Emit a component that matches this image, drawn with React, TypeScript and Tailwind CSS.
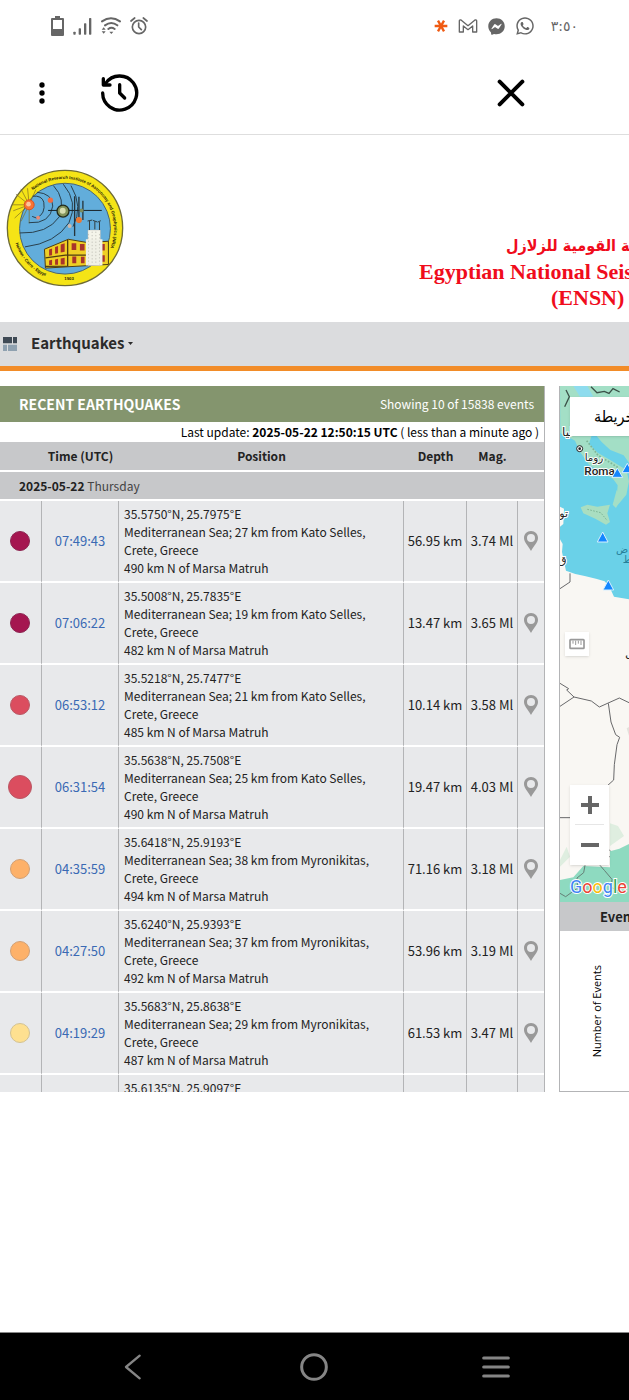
import React from 'react';
import { FaFacebookMessenger, FaWhatsapp } from 'react-icons/fa';

interface Quake {
  time: string;
  coords: string;
  place: string;
  distance: string;
  depth: string;
  mag: string;
  dot: string;
}

const quakes: Quake[] = [
  { time: '07:49:43', coords: '35.5750°N, 25.7975°E', place: 'Mediterranean Sea; 27 km from Kato Selles, Crete, Greece', distance: '490 km N of Marsa Matruh', depth: '56.95 km', mag: '3.74 Ml', dot: 'w-5 h-5 bg-[#a51650] border-[#8c2450]' },
  { time: '07:06:22', coords: '35.5008°N, 25.7835°E', place: 'Mediterranean Sea; 19 km from Kato Selles, Crete, Greece', distance: '482 km N of Marsa Matruh', depth: '13.47 km', mag: '3.65 Ml', dot: 'w-5 h-5 bg-[#a51650] border-[#8c2450]' },
  { time: '06:53:12', coords: '35.5218°N, 25.7477°E', place: 'Mediterranean Sea; 21 km from Kato Selles, Crete, Greece', distance: '485 km N of Marsa Matruh', depth: '10.14 km', mag: '3.58 Ml', dot: 'w-5 h-5 bg-[#db4d5f] border-[#b95865]' },
  { time: '06:31:54', coords: '35.5638°N, 25.7508°E', place: 'Mediterranean Sea; 25 km from Kato Selles, Crete, Greece', distance: '490 km N of Marsa Matruh', depth: '19.47 km', mag: '4.03 Ml', dot: 'w-6 h-6 bg-[#db4d5f] border-[#b95865]' },
  { time: '04:35:59', coords: '35.6418°N, 25.9193°E', place: 'Mediterranean Sea; 38 km from Myronikitas, Crete, Greece', distance: '494 km N of Marsa Matruh', depth: '71.16 km', mag: '3.18 Ml', dot: 'w-5 h-5 bg-[#fdb169] border-[#d2a074]' },
  { time: '04:27:50', coords: '35.6240°N, 25.9393°E', place: 'Mediterranean Sea; 37 km from Myronikitas, Crete, Greece', distance: '492 km N of Marsa Matruh', depth: '53.96 km', mag: '3.19 Ml', dot: 'w-5 h-5 bg-[#fdb169] border-[#d2a074]' },
  { time: '04:19:29', coords: '35.5683°N, 25.8638°E', place: 'Mediterranean Sea; 29 km from Myronikitas, Crete, Greece', distance: '487 km N of Marsa Matruh', depth: '61.53 km', mag: '3.47 Ml', dot: 'w-5 h-5 bg-[#fee090] border-[#d3c293]' },
];

const cell = 'border-r border-r-[#b3b4b6] border-b-2 border-b-white';

const StatusBar: React.FC = () => (
  <div className="h-[52px] px-[51px] flex items-center justify-between text-[#666]">
    <div className="flex items-center gap-[9px]">
      <svg className="w-[13px] h-5" viewBox="0 0 39 60">
        <path d="M12 0h15v6h9q3 0 3 3v48q0 3-3 3H3q-3 0-3-3V9q0-3 3-3h9zM6 12v27h27V12z" fill="currentColor" fillRule="evenodd" />
      </svg>
      <svg className="w-[19px] h-[17px]" viewBox="0 0 57 51" fill="currentColor">
        <rect x="1" y="41" width="7" height="9" rx="2" />
        <rect x="17" y="31" width="7" height="19" rx="2" />
        <rect x="33" y="16" width="7" height="34" rx="2" />
        <rect x="48" y="0" width="7" height="50" rx="2" />
      </svg>
      <svg className="w-5 h-[18px]" viewBox="0 0 60 54" fill="none" stroke="currentColor" strokeWidth="6" strokeLinecap="round">
        <path d="M3 13Q30-6 57 13M12 25q19-14 37 0M22 36q9-7 19 0" />
        <path d="M25 44h12l-6 7zM2 38l6-7 6 7zM2 43h12l-6 7z" fill="currentColor" stroke="none" />
      </svg>
      <svg className="w-[18px] h-[18px]" viewBox="0 0 54 54" fill="none" stroke="currentColor" strokeWidth="5" strokeLinecap="round" strokeLinejoin="round">
        <circle cx="27" cy="30" r="20" />
        <path d="M26 18v12l8 8M3 12L14 3M51 12L40 3" />
      </svg>
    </div>
    <div className="flex items-center gap-[10px]">
      <svg className="w-[14px] h-[14px]" viewBox="0 0 42 42" stroke="#f05a12" strokeWidth="7">
        <path d="M2 21h38M12 5l18 32M30 5L12 37" />
      </svg>
      <svg className="w-5 h-[14px]" viewBox="0 0 60 42" fill="none" stroke="currentColor" strokeWidth="4" strokeLinejoin="round">
        <path d="M4 39V6q0-4 5-3l21 17L51 3q5-1 5 3v33H44V21L30 32 16 21v18z" />
      </svg>
      <FaFacebookMessenger className="w-[17px] h-[17px]" />
      <FaWhatsapp className="w-5 h-5" />
      <span className="pl-[6px] text-sm leading-5 font-['DejaVu_Sans',sans-serif]">٣:٥٠</span>
    </div>
  </div>
);

const Toolbar: React.FC = () => (
  <div className="h-[83px] pl-7 pr-[97px] flex items-center border-b border-[#dedede] text-black">
    <button aria-label="Menu" className="w-7 h-10 flex items-center justify-center">
      <svg className="w-[6px] h-[22px]" viewBox="0 0 18 66" fill="currentColor">
        <circle cx="9" cy="9" r="8" />
        <circle cx="9" cy="33" r="8" />
        <circle cx="9" cy="57" r="8" />
      </svg>
    </button>
    <button aria-label="History" className="ml-11">
      <svg className="w-10 h-10" viewBox="300 220 120 120" fill="none" stroke="currentColor" strokeWidth="10" strokeLinecap="round" strokeLinejoin="round">
        <path d="M308 280A51 51 0 1 0 317 251" />
        <path d="M310 237v19h20M359 255v25l15 15" />
      </svg>
    </button>
    <button aria-label="Close" className="ml-auto w-[42px] h-10 flex items-center justify-center">
      <svg className="w-7 h-7" viewBox="0 0 84 84" stroke="currentColor" strokeWidth="12" strokeLinecap="round">
        <path d="M8 8l68 68M76 8L8 76" />
      </svg>
    </button>
  </div>
);

const Logo: React.FC = () => (
  <svg className="w-[118px] h-[118px] shrink-0" viewBox="17 26 356 356">
    <circle cx="195" cy="204" r="174" fill="#f5e416" stroke="#6e6b35" strokeWidth="4" />
    <circle cx="195" cy="206" r="137" fill="#62addb" stroke="#4b6570" strokeWidth="3" />
    <g stroke="#7b6a22" strokeWidth="2">
      <path d="M87 134L62 86M87 134L82 84M87 134l20-46M87 134l-40-32M87 134H36M87 134l-48 18M87 134l-44 40M87 134l-25 50M87 134v56" />
    </g>
    <g fill="none" stroke="#29404d" strokeWidth="3">
      <path d="M97 108q28-3 34 18 6 36-22 48l-13-5" />
      <path d="M110 96q48 4 48 42-7 54-72 50" />
      <path d="M160 76q38 40 18 94-35 52-120 49" />
      <path d="M190 72q46 54 17 116-40 62-133 73" />
      <path d="M213 76q38 64 6 124" />
      <path d="M144 151H306" stroke="#172126" />
      <path d="M224 108v120M237 110v78M249 122v58" strokeWidth="4" stroke="#26343b" />
    </g>
    <circle cx="87" cy="134" r="15" fill="#f87334" stroke="#d85320" strokeWidth="3" />
    <circle cx="85" cy="132" r="7" fill="#fbc49b" />
    <circle cx="189" cy="153" r="18" fill="#82935a" stroke="#222b1d" strokeWidth="4" />
    <circle cx="188" cy="152" r="9" fill="#d7ddb0" />
    <circle cx="151" cy="120" r="8" fill="#f06b43" />
    <circle cx="237" cy="180" r="9" fill="#ef772f" />
    <circle cx="114" cy="173" r="6" fill="#e78c7a" />
    <circle cx="209" cy="198" r="6" fill="#d5b9a8" />
    <circle cx="245" cy="151" r="6" fill="#7b8b5e" />
    <path d="M133 268l72-30 58 10 63-4v70l-123 7-67 4z" fill="#efcf25" stroke="#4e3c12" strokeWidth="3" />
    <path d="M203 239v81M136 294l66-9 60 1M135 320l68-1" stroke="#4e3c12" strokeWidth="4" fill="none" />
    <g fill="#a9342a">
      <path d="M147 269l9-3v20l-9 2zM165 261l9-3v22l-9 2zM182 254l12-4v26l-12 2zM147 302l9-2v16h-9zM165 299l9-2v18h-9zM182 296l12-2v20h-12z" />
      <path d="M215 250h14v20h-14zM240 252h14v20h-14zM217 290h12v20h-12zM243 291h11v19h-11zM306 252h9v20h-9zM306 286h9v20h-9z" />
    </g>
    <path d="M264 210h38v107h-38z" fill="#f4f4ea" stroke="#999" />
    <path d="M258 238h50v79h-50z" fill="#f0f0e6" />
    <path d="M266 222v92M277 215v100M288 215v100M299 222v92" stroke="#c8c8be" strokeWidth="3" strokeDasharray="4 6" />
    <path d="M269 210v-27m-6 0l14-3M285 208v-24m-6-3l14 5M299 210v-24m-5 0l9-4" stroke="#303c40" strokeWidth="3" />
    <defs>
      <path id="sealTop" d="M98 90A150 150 0 0 1 332 263" />
      <path id="sealBottom" d="M46 250A157 157 0 0 0 165 358" />
    </defs>
    <g className="font-['Liberation_Sans',sans-serif] font-bold" fill="#25200a" fontSize="13">
      <text><textPath href="#sealTop">National Research Institute of Astronomy and Geophysics (NRIAG)</textPath></text>
      <text><textPath href="#sealBottom">Helwan - Cairo - Egypt</textPath></text>
      <text x="193" y="360">1903</text>
    </g>
  </svg>
);

const SiteHeader: React.FC = () => (
  <header className="h-[187px] pl-[6px] flex justify-between overflow-hidden">
    <div className="pt-[34px]">
      <Logo />
    </div>
    <div className="w-[210px] pt-[98px] overflow-hidden whitespace-nowrap font-['Liberation_Serif',serif] font-bold text-[22px] leading-[26px] text-[#f00c1c]">
      <p lang="ar" className="pl-[87px] text-base leading-[26px] font-['DejaVu_Sans_Condensed','DejaVu_Sans',sans-serif]">
        <bdi>ـة القومية للزلازل</bdi>
      </p>
      <h1>Egyptian National Seis</h1>
      <p className="pl-[132px]">(ENSN)</p>
    </div>
  </header>
);

const NavBar: React.FC = () => (
  <nav className="h-[49px] pl-[3px] flex items-center gap-[14px] bg-[#dbdcde] border-b-[5px] border-[#f28c28]">
    <svg className="w-[14px] h-[14px]" viewBox="0 0 42 42">
      <path d="M0 0h27v19H0zM30 0h12v19H30z" fill="#3f4a55" />
      <path d="M0 23h12v19H0zM15 23h27v19H15z" fill="#8fa1b0" />
    </svg>
    <button className="pb-[2px] flex items-center gap-1 text-[15px] leading-6 font-bold text-[#2b2b2b]">
      Earthquakes
      <svg className="w-[5px] h-[3px]" viewBox="0 0 10 6" fill="currentColor">
        <path d="M0 0h10L5 6z" />
      </svg>
    </button>
  </nav>
);

const Pin: React.FC = () => (
  <svg className="w-[14px] h-5 mx-auto block" viewBox="0 0 42 60" fill="#999">
    <path fillRule="evenodd" d="M21 0C9 0 0 9 0 21c0 12 12 23 21 39 9-16 21-27 21-39C42 9 33 0 21 0zm0 9a12 12 0 1 1 0 24 12 12 0 0 1 0-24z" />
  </svg>
);

const EventsPanel: React.FC = () => (
  <section className="flex-1 min-w-0 h-[706px] overflow-hidden border-r border-[#b3b4b6] text-[#222]">
    <div className="h-9 pl-[19px] pr-[10px] flex items-center justify-between bg-[#84956e] text-white">
      <h2 className="text-sm leading-5 font-bold">RECENT EARTHQUAKES</h2>
      <span className="text-xs leading-5">Showing 10 of 15838 events</span>
    </div>
    <p className="h-5 pr-[5px] text-right text-xs leading-5 text-black">
      Last update: <b>2025-05-22 12:50:15 UTC</b> ( less than a minute ago )
    </p>
    <table className="w-full table-fixed border-separate border-spacing-0 text-xs leading-[18px]">
      <colgroup>
        <col className="w-[42px]" />
        <col className="w-[77px]" />
        <col />
        <col className="w-[63px]" />
        <col className="w-[51px]" />
        <col className="w-[26px]" />
      </colgroup>
      <thead>
        <tr className="h-[30px] bg-[#c7c8ca]">
          <th className="border-b-2 border-white" />
          <th className="border-b-2 border-white whitespace-nowrap">Time (UTC)</th>
          <th className="border-b-2 border-white">Position</th>
          <th className="border-b-2 border-white">Depth</th>
          <th className="border-b-2 border-white">Mag.</th>
          <th className="border-b-2 border-white" />
        </tr>
      </thead>
      <tbody>
        <tr className="h-[29px] bg-[#c7c8ca]">
          <td colSpan={6} className="pl-[19px] border-b-2 border-white text-[#444]">
            <b className="text-[#222]">2025-05-22</b> Thursday
          </td>
        </tr>
        {quakes.map((q) => (
          <tr key={q.time} className="bg-[#e8e9eb]">
            <td className={`${cell} pr-[2px]`}>
              <div className={`mx-auto rounded-full border ${q.dot}`} />
            </td>
            <td className={`${cell} text-center text-[13px]`}>
              <a href="#" className="text-[#3a6ab4]">{q.time}</a>
            </td>
            <td className={`${cell} py-1 pl-[5px] pr-5`}>
              <div>{q.coords}</div>
              <div>{q.place}</div>
              <div>{q.distance}</div>
            </td>
            <td className={`${cell} text-center text-[13px] whitespace-nowrap`}>{q.depth}</td>
            <td className={`${cell} text-center text-[13px] whitespace-nowrap`}>{q.mag}</td>
            <td className="border-b-2 border-b-white"><Pin /></td>
          </tr>
        ))}
        <tr className="bg-[#e8e9eb]">
          <td className={cell} />
          <td className={cell} />
          <td className={`${cell} py-1 pl-[5px]`}>35.6135°N, 25.9097°E</td>
          <td className={cell} />
          <td className={cell} />
          <td className="border-b-2 border-b-white" />
        </tr>
      </tbody>
    </table>
  </section>
);

const MapPanel: React.FC = () => (
  <section className="w-[70px] h-[706px] shrink-0 flex flex-col overflow-hidden border-l border-b border-[#b3b4b6]">
    <div className="relative h-[516px] shrink-0">
      <svg className="w-full h-full block" viewBox="30 18 207 1548" preserveAspectRatio="xMinYMin slice">
        <rect x="30" y="18" width="207" height="1548" fill="#6ad1e8" />
        {/* Italy and the Balkans */}
        <path d="M30 18h207v230l-16-22-40-16-26-24-22-26-8 6-8 26 26 26 44 26 42 26 8 34-8 40-30 36-8-12 10-28 2-24-14-20-34-20-38-22-28-40-14-32-24-14-20-8z" fill="#a3dfc6" />
        <path d="M70 18l20 32h40l-18-32z" fill="#8edcee" />
        <path d="M123 20l18 18 22-4 14 6 12-14 20 10M48 30l10 20-14 30" fill="none" stroke="#3b5148" strokeWidth="4" />
        <path d="M92 382l20-8 30 6 38-6-8 26 8 26-12 8-32-18-36-16z" fill="#a9dec1" />
        <path d="M112 388l40 10 20 24" fill="none" stroke="#7eb697" strokeWidth="3" strokeDasharray="5 4" />
        <path d="M110 182l34 44 40 24 22 14" fill="none" stroke="#7eb697" strokeWidth="5" strokeDasharray="5 5" />
        <path d="M200 330l-12 44 10 10 16-36z" fill="#a3dfc6" />
        {/* North Africa */}
        <path d="M30 380l12 6-2 46-10 8zM30 478l8 14-2 24 12 56 28 10 28 6 34 8 26 8 16 20 12 26 45 8v908H30z" fill="#f9f7f3" />
        <path d="M60 580v26l-30 20M30 910l26 16-6 4 22 21-42 28M72 951l52 12 24 18 60-27 29 14M175 970l8 56 14 38 12 8-8 22-8 60-2 46-22 20M30 1313h34M178 1410l20 20H178" fill="none" stroke="#68686a" strokeWidth="3" />
        <path d="M30 1500l40-8 30-34 80 4 0-48 28-8 29-14v174H30z" fill="#8edac0" />
        <path d="M180 1330l24 8 18 30-42 30zM60 1430l-30 30v-20l20-40z" fill="#dfeee0" />
        <path d="M105 1456l-4 22-20 16 2 30-36 26-17-10M150 1456l14 16 22 26-2 24 20 10" fill="none" stroke="#657f76" strokeWidth="3" />
        <path d="M230 1045l7-4v26z" fill="#e4e2dc" />
        <circle cx="89" cy="206" r="9" fill="#fff" stroke="#222" strokeWidth="3" />
        <circle cx="89" cy="206" r="4" fill="#222" />
        <g className="font-['DejaVu_Sans',sans-serif]" fill="#222" stroke="#fff" strokeWidth="6" paintOrder="stroke">
          <text x="104" y="244" fontSize="31">روما</text>
          <text x="36" y="168" fontSize="36">ليا</text>
          <text x="28" y="412" fontSize="33">تو</text>
          <text x="24" y="552" fontSize="33">ق</text>
        </g>
        <g className="font-['DejaVu_Sans',sans-serif]" fill="#27809a" fontSize="30">
          <text x="198" y="518">ض</text>
          <text x="218" y="550">ط</text>
        </g>
        <text x="103" y="286" className="font-[Roboto,sans-serif] font-medium" fill="#222" stroke="#fff" strokeWidth="6" paintOrder="stroke" fontSize="35">Roma</text>
        <text x="225" y="830" className="font-['DejaVu_Sans',sans-serif]" fill="#222" fontSize="36">ل</text>
        <g fill="#1486ff" stroke="#d7f0ff" strokeWidth="3">
          <path d="M202 264l16 28h-32zM232 250l16 28h-32zM158 456l16 30h-32zM175 600l16 30h-32z" />
        </g>
        <g className="font-[Roboto,sans-serif]" fontSize="54" stroke="#fff" strokeWidth="6" paintOrder="stroke">
          <text x="60" y="1540">
            <tspan fill="#4285f4">G</tspan>
            <tspan fill="#ea4335">o</tspan>
            <tspan fill="#fbbc05">o</tspan>
            <tspan fill="#4285f4">g</tspan>
            <tspan fill="#34a853">l</tspan>
            <tspan fill="#ea4335">e</tspan>
          </text>
        </g>
      </svg>
      <button lang="ar" className="absolute top-[11px] left-[10px] w-20 h-[39px] pl-6 text-left bg-white shadow font-['DejaVu_Sans_Condensed','DejaVu_Sans',sans-serif] text-base text-black whitespace-nowrap">
        خريطة
      </button>
      <button aria-label="Measure" className="absolute top-[246px] left-[5px] w-6 h-6 flex items-center justify-center bg-white shadow">
        <svg className="w-4 h-3" viewBox="0 0 48 36" fill="none" stroke="#999" strokeWidth="5">
          <rect x="3" y="5" width="42" height="26" rx="2" />
          <path d="M12 8v9M20 8v13M28 8v9M36 8v13" strokeWidth="3" />
        </svg>
      </button>
      <div className="absolute top-[399px] left-[10px] w-[39px] h-20 px-[5px] bg-white shadow">
        <button aria-label="Zoom in" className="w-full h-10 flex items-center justify-center border-b border-[#e6e6e6]">
          <svg className="w-[18px] h-[18px]" viewBox="0 0 18 18" fill="#666"><path d="M7 0h4v7h7v4h-7v7H7v-7H0V7h7z" /></svg>
        </button>
        <button aria-label="Zoom out" className="w-full h-10 flex items-center justify-center">
          <svg className="w-[18px] h-1" viewBox="0 0 18 4" fill="#666"><path d="M0 0h18v4H0z" /></svg>
        </button>
      </div>
    </div>
    <h3 className="h-[29px] shrink-0 pl-10 bg-[#c7c8ca] text-[13px] leading-[29px] font-bold text-[#222] whitespace-nowrap">Even</h3>
    <div className="flex-1 pl-[27px] flex items-center">
      <span className="[writing-mode:vertical-rl] rotate-180 text-[11px] leading-5 font-['Open_Sans',sans-serif] text-black whitespace-nowrap">Number of Events</span>
    </div>
  </section>
);

const SystemNav: React.FC = () => (
  <footer className="h-[68px] px-[42px] grid grid-cols-3 items-center justify-items-center bg-black border-t border-[#888] text-[#858585]">
    <button aria-label="Back">
      <svg className="w-[18px] h-[26px]" viewBox="0 0 54 78" fill="none" stroke="currentColor" strokeWidth="7" strokeLinecap="round" strokeLinejoin="round">
        <path d="M47 5L6 39l41 34" />
      </svg>
    </button>
    <button aria-label="Home">
      <svg className="w-7 h-7" viewBox="0 0 84 84" fill="none" stroke="currentColor" strokeWidth="9">
        <circle cx="42" cy="42" r="37" />
      </svg>
    </button>
    <button aria-label="Recents">
      <svg className="w-7 h-6" viewBox="0 0 84 72" stroke="currentColor" strokeWidth="9" strokeLinecap="round">
        <path d="M5 9h74M5 36h74M5 63h74" />
      </svg>
    </button>
  </footer>
);

const App: React.FC = () => {
  return (
    <div className="min-h-screen flex flex-col overflow-hidden bg-white font-['Noto_Sans_CJK_SC',sans-serif]">
      <StatusBar />
      <Toolbar />
      <SiteHeader />
      <NavBar />
      <main className="flex-1 pt-[15px] flex items-start gap-[14px]">
        <EventsPanel />
        <MapPanel />
      </main>
      <SystemNav />
    </div>
  );
};

export default App;
